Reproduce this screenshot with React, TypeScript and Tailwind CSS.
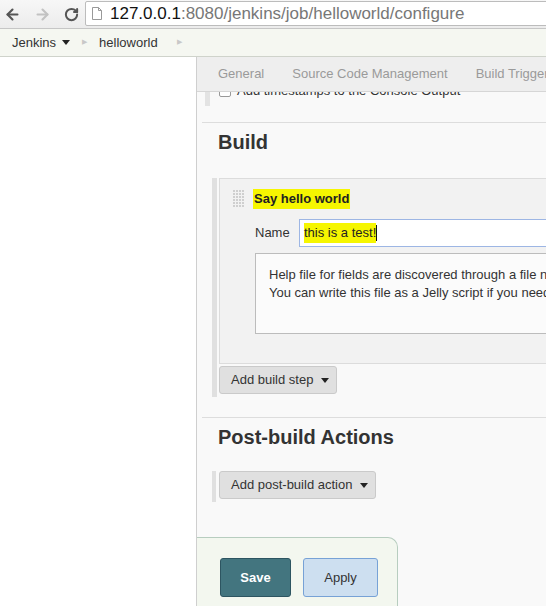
import { ArrowLeft, ArrowRight, RotateCw } from 'lucide-react';

function DragHandle() {
  const dots = [];
  for (let r = 0; r < 6; r++) {
    for (let c = 0; c < 4; c++) {
      dots.push(<rect key={`${r}-${c}`} x={c * 3} y={r * 3} width={2} height={2} fill="#cfcfcf" />);
    }
  }
  return (
    <svg width="12" height="18" viewBox="0 0 12 18">
      {dots}
    </svg>
  );
}

function Caret() {
  return (
    <svg width="8" height="5" viewBox="0 0 8 5">
      <path d="M0 0h8L4 5z" fill="#222" />
    </svg>
  );
}

function MenuButton({ label }: { label: string }) {
  return (
    <button className="h-[28px] flex items-center pl-[11px] pr-[7px] gap-[8px] bg-[#e0e0e0] border border-[#cacaca] rounded-[3px] text-[13px] text-[#333]">
      <span>{label}</span>
      <Caret />
    </button>
  );
}

export default function App() {
  return (
    <div className="w-[546px] h-[606px] overflow-hidden flex flex-col font-['Liberation_Sans',Arial,sans-serif] bg-white">
      {/* browser toolbar */}
      <div className="h-[29px] shrink-0 flex items-center bg-gradient-to-b from-[#f7f7f7] to-[#ececec] border-b border-[#c6c6c6]">
        <div className="w-[85px] flex items-center pl-[4px] gap-[13px]">
          <ArrowLeft size={17} strokeWidth={3} color="#555" />
          <ArrowRight size={17} strokeWidth={3} color="#c2c2c2" />
          <RotateCw size={15} strokeWidth={3.2} color="#555" />
        </div>
        <div className="flex-1 h-[25px] -mt-[2px] bg-white border border-[#bcbcbc] rounded-[2px] flex items-center pl-[6px] gap-[8px] mr-[-10px]">
          <svg width="10" height="13" viewBox="0 0 10 13">
            <path d="M0.5 0.5h6l3 3v9h-9z M6.5 0.5v3h3" fill="#fff" stroke="#999" />
          </svg>
          <span className="text-[17px] leading-none text-[#777] whitespace-nowrap">
            <span className="text-[#111]">127.0.0.1</span>:8080/jenkins/job/helloworld/configure
          </span>
        </div>
      </div>

      {/* breadcrumbs */}
      <div className="h-[28px] shrink-0 flex items-center bg-[#f5f7f1] border-b border-[#cfd3cb] text-[13px] text-[#333]">
        <span className="pl-[12px]">Jenkins</span>
        <span className="ml-[6px]"><Caret /></span>
        <span className="ml-[12px] text-[7px] text-[#c8c8c8]">▶</span>
        <span className="ml-[12px]">helloworld</span>
        <span className="ml-[19px] text-[7px] text-[#c8c8c8]">▶</span>
      </div>

      {/* page */}
      <div className="flex-1 flex min-h-0">
        <div className="w-[197px] shrink-0 bg-white border-r border-[#cfcfcf]" />
        <div className="flex-1 min-w-0 overflow-hidden bg-[#f9f9f9]">
          <div className="w-[700px] flex flex-col">
            {/* tabs */}
            <div className="relative z-10 h-[35px] bg-[#eeeeee] border-b border-[#d6d6d6] flex items-center text-[13px] text-[#9a9a9a] pl-[21px] gap-[28px]">
              <span>General</span>
              <span>Source Code Management</span>
              <span>Build Triggers</span>
            </div>

            {/* scrolled-off option */}
            <div className="h-[31px] flex pl-[8px] border-b border-[#dddddd] ml-[5px]">
              <div className="w-[5px] h-[14px] bg-[#e3e3e3] -ml-[5px]" />
              <div className="-mt-[9px] h-[16px] flex items-center gap-[6px] ml-[9px] text-[13px] text-[#333]">
                <span className="w-[12px] h-[12px] border border-[#999] rounded-[2px] bg-white" />
                <span>Add timestamps to the Console Output</span>
              </div>
            </div>

            {/* Build */}
            <h2 className="pt-[7px] pl-[21px] text-[20px] leading-[24px] font-bold text-[#333]">Build</h2>

            <div className="mt-[24px] flex pl-[15px] gap-[2px]">
              <div className="w-[5px] bg-[#e0e0e0]" />
              <div className="flex-1 flex flex-col pb-[3px]">
                <div className="bg-[#f2f2f2] border-t border-b border-l border-[#dcdcdc] pb-[29px]">
                  <div className="pt-[9px] pl-[13px] h-[31px] flex items-center gap-[8px]">
                    <DragHandle />
                    <span className="bg-[#f6f600] px-[1px] text-[13px] leading-[20px] font-bold text-[#222]">Say hello world</span>
                  </div>
                  <div className="mt-[9px] pl-[35px] flex items-center">
                    <span className="w-[44px] text-[13px] text-[#333]">Name</span>
                    <div className="flex-1 h-[28px] bg-white border border-[#9db6e4] flex items-center pl-[4px]">
                      <span className="bg-[#f6f600] text-[13px] leading-[20px] text-[#222]">this is a test!</span>
                      <span className="w-[1px] h-[16px] bg-[#111]" />
                    </div>
                  </div>
                  <div className="mt-[6px] ml-[35px] h-[81px] border border-[#bcbcbc] bg-[#fbfbfb] pt-[12px] pl-[13px] text-[13px] leading-[18px] text-[#333] whitespace-nowrap">
                    <div>Help file for fields are discovered through a file name convention.</div>
                    <div>You can write this file as a Jelly script if you need.</div>
                  </div>
                </div>
                <div className="mt-[2px]">
                  <MenuButton label="Add build step" />
                </div>
              </div>
            </div>

            {/* Post-build */}
            <div className="mt-[20px] ml-[5px] border-t border-[#dddddd]" />
            <h2 className="pt-[7px] pl-[21px] text-[20px] leading-[24px] font-bold text-[#333]">Post-build Actions</h2>

            <div className="mt-[22px] flex pl-[15px] gap-[3px]">
              <div className="w-[4px] h-[31px] bg-[#e0e0e0]" />
              <div>
                <MenuButton label="Add post-build action" />
              </div>
            </div>

            {/* bottom bar */}
            <div className="mt-[35px] w-[201px] h-[80px] bg-[#f3f7ef] border-t border-r border-[#b7cdbf] rounded-tr-[10px] pt-[20px] pl-[23px] flex gap-[12px] items-start">
              <button className="w-[71px] h-[39px] bg-[#43757f] border border-[#2d5561] rounded-[3px] text-[13px] font-bold text-white">
                Save
              </button>
              <button className="w-[75px] h-[39px] bg-[#cddff0] border border-[#77a2d6] rounded-[3px] text-[13px] text-[#333]">
                Apply
              </button>
            </div>
          </div>
        </div>
      </div>
    </div>
  );
}
